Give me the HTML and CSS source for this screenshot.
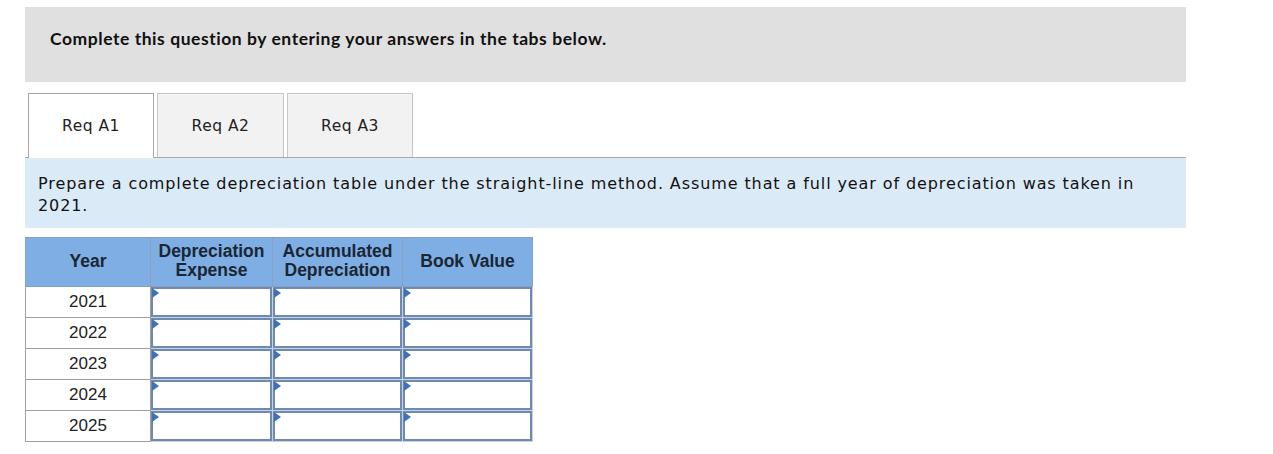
FILE: index.html
```html
<!DOCTYPE html>
<html>
<head>
<meta charset="utf-8">
<link rel="stylesheet" href="styles.css">
</head>
<body>
<div class="page">
  <div class="banner">Complete this question by entering your answers in the tabs below.</div>
  <div class="tabs">
    <div class="tab active">Req A1</div>
    <div class="tab wide">Req A2</div>
    <div class="tab">Req A3</div>
  </div>
  <div class="panel">
    <p class="instr">Prepare a complete depreciation table under the straight-line method. Assume that a full year of depreciation was taken in 2021.</p>
  </div>
  <table class="dep">
    <thead>
      <tr>
        <th class="c-year">Year</th>
        <th class="c-exp">Depreciation<br>Expense</th>
        <th class="c-acc">Accumulated<br>Depreciation</th>
        <th class="c-book">Book Value</th>
      </tr>
    </thead>
    <tbody>
      <tr><td class="year">2021</td><td class="inp"><div class="box"></div></td><td class="inp"><div class="box"></div></td><td class="inp"><div class="box"></div></td></tr>
      <tr><td class="year">2022</td><td class="inp"><div class="box"></div></td><td class="inp"><div class="box"></div></td><td class="inp"><div class="box"></div></td></tr>
      <tr><td class="year">2023</td><td class="inp"><div class="box"></div></td><td class="inp"><div class="box"></div></td><td class="inp"><div class="box"></div></td></tr>
      <tr><td class="year">2024</td><td class="inp"><div class="box"></div></td><td class="inp"><div class="box"></div></td><td class="inp"><div class="box"></div></td></tr>
      <tr><td class="year">2025</td><td class="inp"><div class="box"></div></td><td class="inp"><div class="box"></div></td><td class="inp"><div class="box"></div></td></tr>
    </tbody>
  </table>
</div>
</body>
</html>
```
FILE: styles.css
```css
html, body {
  margin: 0;
  padding: 0;
  background: #ffffff;
}
.page {
  width: 1161px;
  margin-left: 25px;
  padding-top: 7px;
}
.banner {
  height: 75px;
  background: #e0e0e0;
  box-sizing: border-box;
  padding-left: 25px;
  padding-top: 21px;
  font-family: Lato, "Open Sans", sans-serif;
  font-weight: bold;
  font-size: 17.5px;
  letter-spacing: 0.55px;
  color: #111;
}
.tabs {
  display: flex;
  gap: 3px;
  margin-top: 11px;
  padding-left: 3px;
  border-bottom: 1px solid #a8a8a8;
  height: 64px;
}
.tab {
  width: 126px;
  height: 64px;
  box-sizing: border-box;
  border: 1px solid #c6c6c6;
  border-bottom: none;
  background: #f2f2f2;
  display: flex;
  align-items: center;
  justify-content: center;
  font-family: "DejaVu Sans", Verdana, sans-serif;
  font-size: 15.5px;
  letter-spacing: 0.5px;
  color: #222;
}
.tab.wide {
  width: 127px;
}
.tab.active {
  background: #ffffff;
  height: 65px;
  border-color: #a8a8a8;
  position: relative;
  z-index: 1;
}
.panel {
  height: 70px;
  background: #dbeaf7;
  box-sizing: border-box;
  padding: 15px 30px 0 13px;
}
.instr {
  margin: 0;
  font-family: "DejaVu Sans", Verdana, sans-serif;
  font-size: 16px;
  letter-spacing: 0.9px;
  line-height: 22px;
  color: #111;
  width: 1118px;
}
table.dep {
  margin-top: 9px;
  border-collapse: collapse;
  font-family: "Liberation Sans", Arial, sans-serif;
}
table.dep th {
  background: #7eaee3;
  border: 1px solid #8aa0bd;
  height: 49px;
  padding: 0 0 2px;
  font-size: 17.5px;
  line-height: 19px;
  color: #1b2634;
  font-weight: bold;
  box-sizing: border-box;
}
.c-year { width: 125px; }
.c-exp { width: 122px; }
.c-acc { width: 130px; }
.c-book { width: 130px; }
td.year {
  border: 1px solid #a0a0a0;
  height: 31px;
  padding: 0;
  text-align: center;
  font-size: 17px;
  color: #222;
  box-sizing: border-box;
}
td.inp {
  border: 1px solid #c9d2dd;
  padding: 0;
  height: 31px;
  position: relative;
  box-sizing: border-box;
}
.box {
  height: 30px;
  box-sizing: border-box;
  border: 2px solid #6d8ab0;
  background: #fff;
}
td.inp::before {
  content: "";
  position: absolute;
  left: 1px;
  top: 1px;
  width: 0;
  height: 0;
  border-top: 5px solid transparent;
  border-bottom: 5px solid transparent;
  border-left: 7px solid #3e72b4;
}
```
